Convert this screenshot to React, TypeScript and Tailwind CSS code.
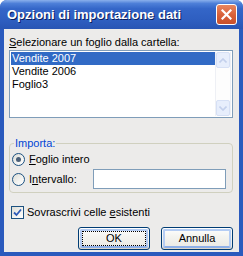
import React from 'react';

const font = { fontFamily: '"Liberation Sans", Arial, sans-serif' };

function Radio({ checked }: { checked?: boolean }) {
  return (
    <span className="w-[13px] h-[13px] rounded-full border border-[#1c5180] bg-[linear-gradient(135deg,#dcdcd5_0%,#f4f4f2_60%,#ffffff_100%)] flex items-center justify-center shrink-0">
      {checked && <span className="w-[5px] h-[5px] rounded-full bg-[#4a5f78]" />}
    </span>
  );
}

function XpButton({ label, focused }: { label: string; focused?: boolean }) {
  return (
    <button className="w-[72px] h-[23px] rounded-[3px] border border-[#003c74] bg-[linear-gradient(180deg,#ffffff_0%,#f4f4f0_40%,#ecebe6_85%,#d6d0c5_100%)] p-[1px] text-[11px] text-black">
      <span className={`w-full h-full flex items-center justify-center rounded-[2px] border-2 border-[#b5cdf4] border-b-[#8fb0e8] ${focused ? 'outline outline-1 outline-dotted outline-black -outline-offset-3' : ''}`}>
        {label}
      </span>
    </button>
  );
}

export default function App() {
  return (
    <div className="w-[243px] h-[256px] flex flex-col rounded-t-[7px] overflow-hidden bg-[#2a5abd] text-black" style={font}>
      {/* title bar */}
      <div className="h-[29px] shrink-0 flex items-center justify-between pl-[7px] pr-[6px] bg-[linear-gradient(180deg,#8ab0ec_0%,#4d7fd8_12%,#3466c8_30%,#2e5ec0_70%,#2855b4_100%)]">
        <span className="text-white font-bold text-[13px] [text-shadow:1px_1px_0_#0a1e5e] mt-[1px]">Opzioni di importazione dati</span>
        <span className="w-[21px] h-[21px] rounded-[3px] border border-white bg-[linear-gradient(180deg,#e8865f_0%,#d9623b_50%,#c9502b_100%)] flex items-center justify-center">
          <svg width="11" height="11" viewBox="0 0 11 11">
            <path d="M1.5 1.5 L9.5 9.5 M9.5 1.5 L1.5 9.5" stroke="#fff" strokeWidth="2.2" strokeLinecap="square" />
          </svg>
        </span>
      </div>

      {/* body */}
      <div className="flex-1 mx-[4px] mb-[4px] bg-[#ecebea] pl-[5px] pr-[6px] pt-[7px] flex flex-col text-[11px] leading-[13px]">
        <div><span className="underline">S</span>elezionare un foglio dalla cartella:</div>

        <div className="mt-[1px] h-[68px] border border-[#7f9db9] bg-white p-[1px] flex">
          <div className="flex-1 flex flex-col">
            <div className="h-[13px] bg-[#316ac5] text-white pl-[1px]">Vendite 2007</div>
            <div className="h-[13px] pl-[1px]">Vendite 2006</div>
            <div className="h-[13px] pl-[1px]">Foglio3</div>
          </div>
          <div className="w-[16px] flex flex-col bg-[#fdfdfd] border-x border-[#eef0f5]">
            <div className="h-[16px] rounded-[2px] border border-[#d6e0f5] bg-[#e7eefc] flex items-center justify-center">
              <svg width="8" height="5" viewBox="0 0 8 5"><path d="M0.5 4.5 L4 1 L7.5 4.5" fill="none" stroke="#c3d0ec" strokeWidth="1.6" /></svg>
            </div>
            <div className="flex-1" />
            <div className="h-[16px] rounded-[2px] border border-[#d6e0f5] bg-[#e7eefc] flex items-center justify-center">
              <svg width="8" height="5" viewBox="0 0 8 5"><path d="M0.5 0.5 L4 4 L7.5 0.5" fill="none" stroke="#c3d0ec" strokeWidth="1.6" /></svg>
            </div>
          </div>
        </div>

        <fieldset className="mt-[19px] border border-[#d0d0bf] rounded-[4px] pl-[2px] pr-[6px] pb-[3px]">
          <legend className="ml-[2px] px-[1px] text-[#0046d5]">Importa:</legend>
          <div className="mt-[3px] h-[13px] flex items-center gap-[4px]">
            <Radio checked />
            <span><span className="underline">F</span>oglio intero</span>
          </div>
          <div className="mt-[3px] h-[20px] flex items-center">
            <div className="flex items-center gap-[4px] w-[81px]">
              <Radio />
              <span>I<span className="underline">n</span>tervallo:</span>
            </div>
            <div className="flex-1 h-[20px] border border-[#7f9db9] bg-white" />
          </div>
        </fieldset>

        <div className="mt-[13px] h-[13px] flex items-center gap-[3px] pl-[2px]">
          <span className="w-[13px] h-[13px] border border-[#1c5180] bg-[linear-gradient(135deg,#dcdcd5_0%,#f4f4f2_60%,#ffffff_100%)] flex items-center justify-center">
            <svg width="9" height="9" viewBox="0 0 9 9"><path d="M1 4.5 L3.5 7 L8 1.5" fill="none" stroke="#2f5bb7" strokeWidth="1.8" /></svg>
          </span>
          <span>Sovrascrivi celle <span className="underline">e</span>sistenti</span>
        </div>

        <div className="mt-[8px] flex justify-end gap-[11px]">
          <XpButton label="OK" focused />
          <XpButton label="Annulla" />
        </div>
      </div>
    </div>
  );
}
